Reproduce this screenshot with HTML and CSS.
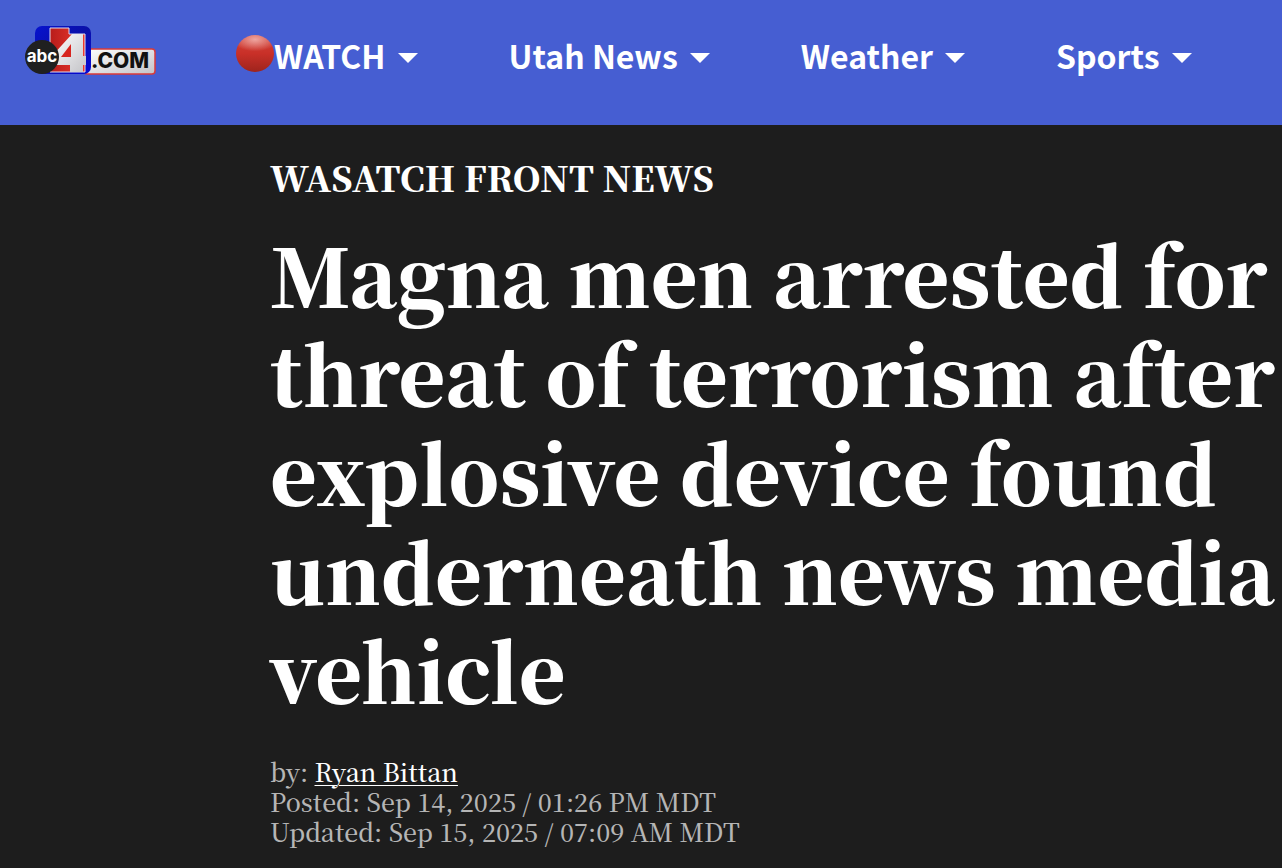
FILE: index.html
```html
<!DOCTYPE html>
<html lang="en">
    <head>
        <meta charset="UTF-8" />
        <meta name="viewport" content="width=device-width, initial-scale=1.0" />
        <title>Magna men arrested for threat of terrorism | ABC4 Utah</title>
        <link rel="stylesheet" href="styles.css">
    </head>
    <body>
        <header class="site-header">
            <a class="logo" href="#" aria-label="abc4.com home">
                <svg width="132" height="50" viewBox="0 0 132 50">
                    <defs>
                        <linearGradient id="blue" x1="0" y1="0" x2="1" y2="1">
                            <stop offset="0" stop-color="#0713cf" />
                            <stop offset="0.5" stop-color="#0a10a8" />
                            <stop offset="1" stop-color="#0508d8" />
                        </linearGradient>
                        <linearGradient id="silver" x1="0" y1="0" x2="1" y2="1">
                            <stop offset="0" stop-color="#fff" />
                            <stop offset="1" stop-color="#c4c4c8" />
                        </linearGradient>
                        <linearGradient id="red" x1="0" y1="0" x2="1" y2="0">
                            <stop offset="0" stop-color="#b81c1a" />
                            <stop offset="1" stop-color="#ee3a30" />
                        </linearGradient>
                    </defs>
                    <rect x="60" y="24" width="71" height="25" rx="3" fill="url(#silver)" stroke="#d93a3a" stroke-width="1.5" />
                    <rect x="11" y="1" width="56" height="48" rx="7" fill="url(#blue)" />
                    <path d="M26 3H45V9H61V47H26z" fill="url(#red)" stroke="#dcdcf0" stroke-width="1" />
                    <path d="M48 9H59V31H62V40H59V47H46V40H28V31z" fill="url(#silver)" />
                    <path d="M47 19V32H37z" fill="#d7251f" />
                    <circle cx="18" cy="32" r="17" fill="#202020" />
                    <text class="logo-abc" x="18" y="37">abc</text>
                    <text class="logo-com" x="67" y="43">.COM</text>
                </svg>
            </a>
            <nav class="menu" aria-label="Main">
                <button class="menu-item" type="button" aria-haspopup="true"><span class="live-dot"></span>WATCH<span class="caret"></span></button>
                <button class="menu-item" type="button" aria-haspopup="true">Utah News<span class="caret"></span></button>
                <button class="menu-item" type="button" aria-haspopup="true">Weather<span class="caret"></span></button>
                <button class="menu-item" type="button" aria-haspopup="true">Sports<span class="caret"></span></button>
            </nav>
        </header>
        <main class="article">
            <h2 class="category">WASATCH FRONT NEWS</h2>
            <h1 class="title">Magna men arrested for threat of terrorism after explosive device found underneath news media vehicle</h1>
            <div class="meta">
                <p>by: <a href="#">Ryan Bittan</a></p>
                <p>Posted: Sep 14, 2025 / 01:26 PM MDT</p>
                <p>Updated: Sep 15, 2025 / 07:09 AM MDT</p>
            </div>
        </main>
    </body>
</html>
```
FILE: styles.css
```css
* {
    margin: 0;
    padding: 0;
    box-sizing: border-box;
}
body {
    background-color: #1d1d1d;
    color: #fff;
    font-family: "Source Serif Pro", "Noto Serif CJK SC", "Liberation Serif", serif;
}
.site-header {
    display: flex;
    align-items: flex-start;
    gap: 80px;
    padding: 25px 24px 40px;
    background-color: #465ed2;
}
.logo {
    display: flex;
    flex-shrink: 0;
}
.logo-abc {
    font: bold 17px Inter, sans-serif;
    fill: #fff;
    text-anchor: middle;
}
.logo-com {
    font: 800 21px Inter, sans-serif;
    fill: #111;
}
.menu {
    display: flex;
    gap: 91px;
}
.menu-item {
    display: flex;
    align-items: center;
    border: 0;
    background: none;
    color: #fff;
    font: bold 32px/60px "Noto Sans CJK SC", sans-serif;
    white-space: nowrap;
    cursor: pointer;
}
.live-dot {
    width: 38px;
    height: 37px;
    margin-bottom: 3px;
    border-radius: 50%;
    background: radial-gradient(ellipse 60% 32% at 50% 12%, #eea6a0, transparent), linear-gradient(#d2443b, #c93028 50%, #9e241d);
}
.caret {
    margin: 6px 0 0 12px;
    border: 10px solid transparent;
    border-top-color: #fff;
    border-bottom: 0;
}
.article {
    padding: 30px 0 20px 270px;
}
.category {
    font-size: 35px;
    font-weight: 900;
    line-height: 44px;
}
.title {
    margin-top: 25px;
    font-size: 80px;
    font-weight: 900;
    line-height: 99px;
}
.meta {
    margin-top: 37px;
    color: #b5b5b5;
    font-size: 25px;
    font-weight: 500;
    line-height: 30px;
}
.meta a {
    color: #fff;
    text-decoration-thickness: 1px;
    text-underline-offset: 3px;
}
```
